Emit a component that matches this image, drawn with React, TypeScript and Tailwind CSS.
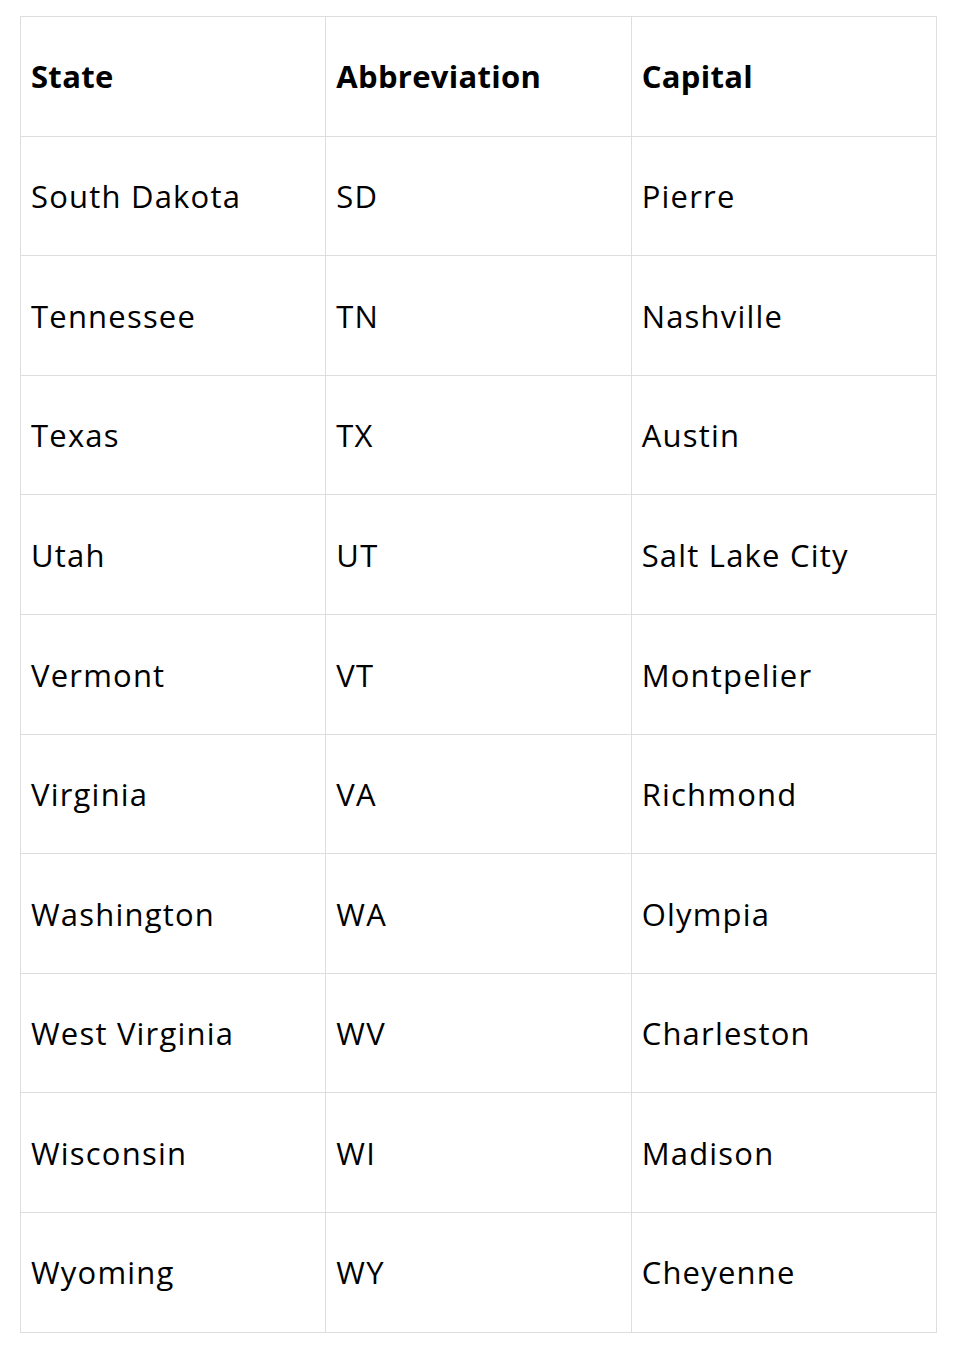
import React from 'react';

const rows: [string, string, string][] = [
  ['South Dakota', 'SD', 'Pierre'],
  ['Tennessee', 'TN', 'Nashville'],
  ['Texas', 'TX', 'Austin'],
  ['Utah', 'UT', 'Salt Lake City'],
  ['Vermont', 'VT', 'Montpelier'],
  ['Virginia', 'VA', 'Richmond'],
  ['Washington', 'WA', 'Olympia'],
  ['West Virginia', 'WV', 'Charleston'],
  ['Wisconsin', 'WI', 'Madison'],
  ['Wyoming', 'WY', 'Cheyenne'],
];

export default function App() {
  return (
    <div className="bg-white min-h-[1358px] pt-4 pl-5" style={{ fontFamily: '"Open Sans", "Noto Sans", sans-serif' }}>
      <table className="w-[917px] border-collapse table-fixed text-[31px] text-black">
        <thead>
          <tr className="h-[119.6px]">
            {['State', 'Abbreviation', 'Capital'].map((h) => (
              <th key={h} className="border border-[#dedede] pl-2.5 text-left font-bold align-middle tracking-[0.3px]">
                {h}
              </th>
            ))}
          </tr>
        </thead>
        <tbody>
          {rows.map((r) => (
            <tr key={r[0]} className="h-[119.6px]">
              {r.map((c, i) => (
                <td key={i} className="border border-[#dedede] pl-2.5 align-middle tracking-[1.2px] pt-px">
                  {c}
                </td>
              ))}
            </tr>
          ))}
        </tbody>
      </table>
    </div>
  );
}
